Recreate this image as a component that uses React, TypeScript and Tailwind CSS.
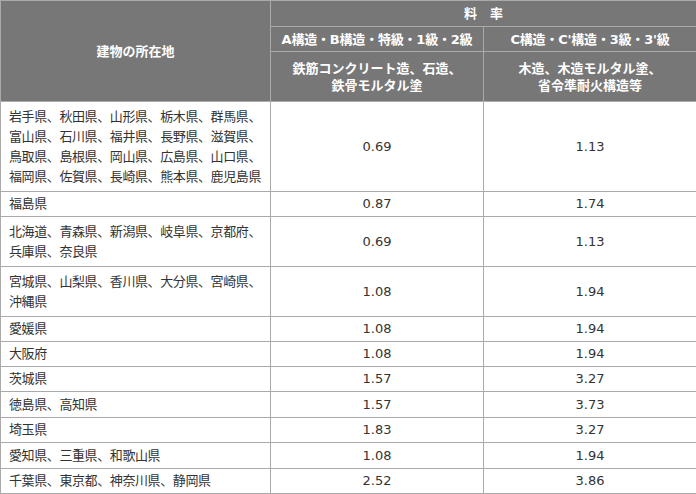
import React from "react";

type Row = { lines: string[]; a: string; c: string; h: string };

const rows: Row[] = [
  {
    lines: [
      "岩手県、秋田県、山形県、栃木県、群馬県、",
      "富山県、石川県、福井県、長野県、滋賀県、",
      "鳥取県、島根県、岡山県、広島県、山口県、",
      "福岡県、佐賀県、長崎県、熊本県、鹿児島県",
    ],
    a: "0.69",
    c: "1.13",
    h: "h-[90px]",
  },
  { lines: ["福島県"], a: "0.87", c: "1.74", h: "h-[25px]" },
  {
    lines: ["北海道、青森県、新潟県、岐阜県、京都府、", "兵庫県、奈良県"],
    a: "0.69",
    c: "1.13",
    h: "h-[50px]",
  },
  {
    lines: ["宮城県、山梨県、香川県、大分県、宮崎県、", "沖縄県"],
    a: "1.08",
    c: "1.94",
    h: "h-[50px]",
  },
  { lines: ["愛媛県"], a: "1.08", c: "1.94", h: "h-[25px]" },
  { lines: ["大阪府"], a: "1.08", c: "1.94", h: "h-[25px]" },
  { lines: ["茨城県"], a: "1.57", c: "3.27", h: "h-[25px]" },
  { lines: ["徳島県、高知県"], a: "1.57", c: "3.73", h: "h-[26px]" },
  { lines: ["埼玉県"], a: "1.83", c: "3.27", h: "h-[25px]" },
  { lines: ["愛知県、三重県、和歌山県"], a: "1.08", c: "1.94", h: "h-[26px]" },
  { lines: ["千葉県、東京都、神奈川県、静岡県"], a: "2.52", c: "3.86", h: "h-[25px]" },
];

const th =
  "border border-[#aaaaaa] bg-[#777777] text-white font-bold text-center align-middle leading-[17px] p-0";
const td = "border border-[#aaaaaa] align-middle leading-[20px] font-normal";

export default function App() {
  return (
    <div className="w-[696px] h-[494px] bg-white">
      <table className="w-[696px] border-collapse table-fixed text-[13px] text-[#333333] font-['DejaVu_Sans','Noto_Sans_CJK_JP',sans-serif]">
        <colgroup>
          <col className="w-[270px]" />
          <col className="w-[213px]" />
          <col className="w-[213px]" />
        </colgroup>
        <thead>
          <tr className="h-[26px]">
            <th rowSpan={3} className={th}>
              建物の所在地
            </th>
            <th colSpan={2} className={th}>
              料　率
            </th>
          </tr>
          <tr className="h-[25px]">
            <th className={`${th} tracking-[-0.2px]`}>A構造・B構造・特級・1級・2級</th>
            <th className={`${th} tracking-[-0.2px]`}>C構造・C'構造・3級・3'級</th>
          </tr>
          <tr className="h-[50px]">
            <th className={th}>
              鉄筋コンクリート造、石造、
              <br />
              鉄骨モルタル塗
            </th>
            <th className={th}>
              木造、木造モルタル塗、
              <br />
              省令準耐火構造等
            </th>
          </tr>
        </thead>
        <tbody>
          {rows.map((r, i) => (
            <tr key={i} className={r.h}>
              <td className={`${td} px-2 py-0 text-left tracking-[-0.4px]`}>
                {r.lines.map((l, j) => (
                  <div key={j} className="whitespace-nowrap">
                    {l}
                  </div>
                ))}
              </td>
              <td className={`${td} p-0 text-center`}>{r.a}</td>
              <td className={`${td} p-0 text-center`}>{r.c}</td>
            </tr>
          ))}
        </tbody>
      </table>
    </div>
  );
}
